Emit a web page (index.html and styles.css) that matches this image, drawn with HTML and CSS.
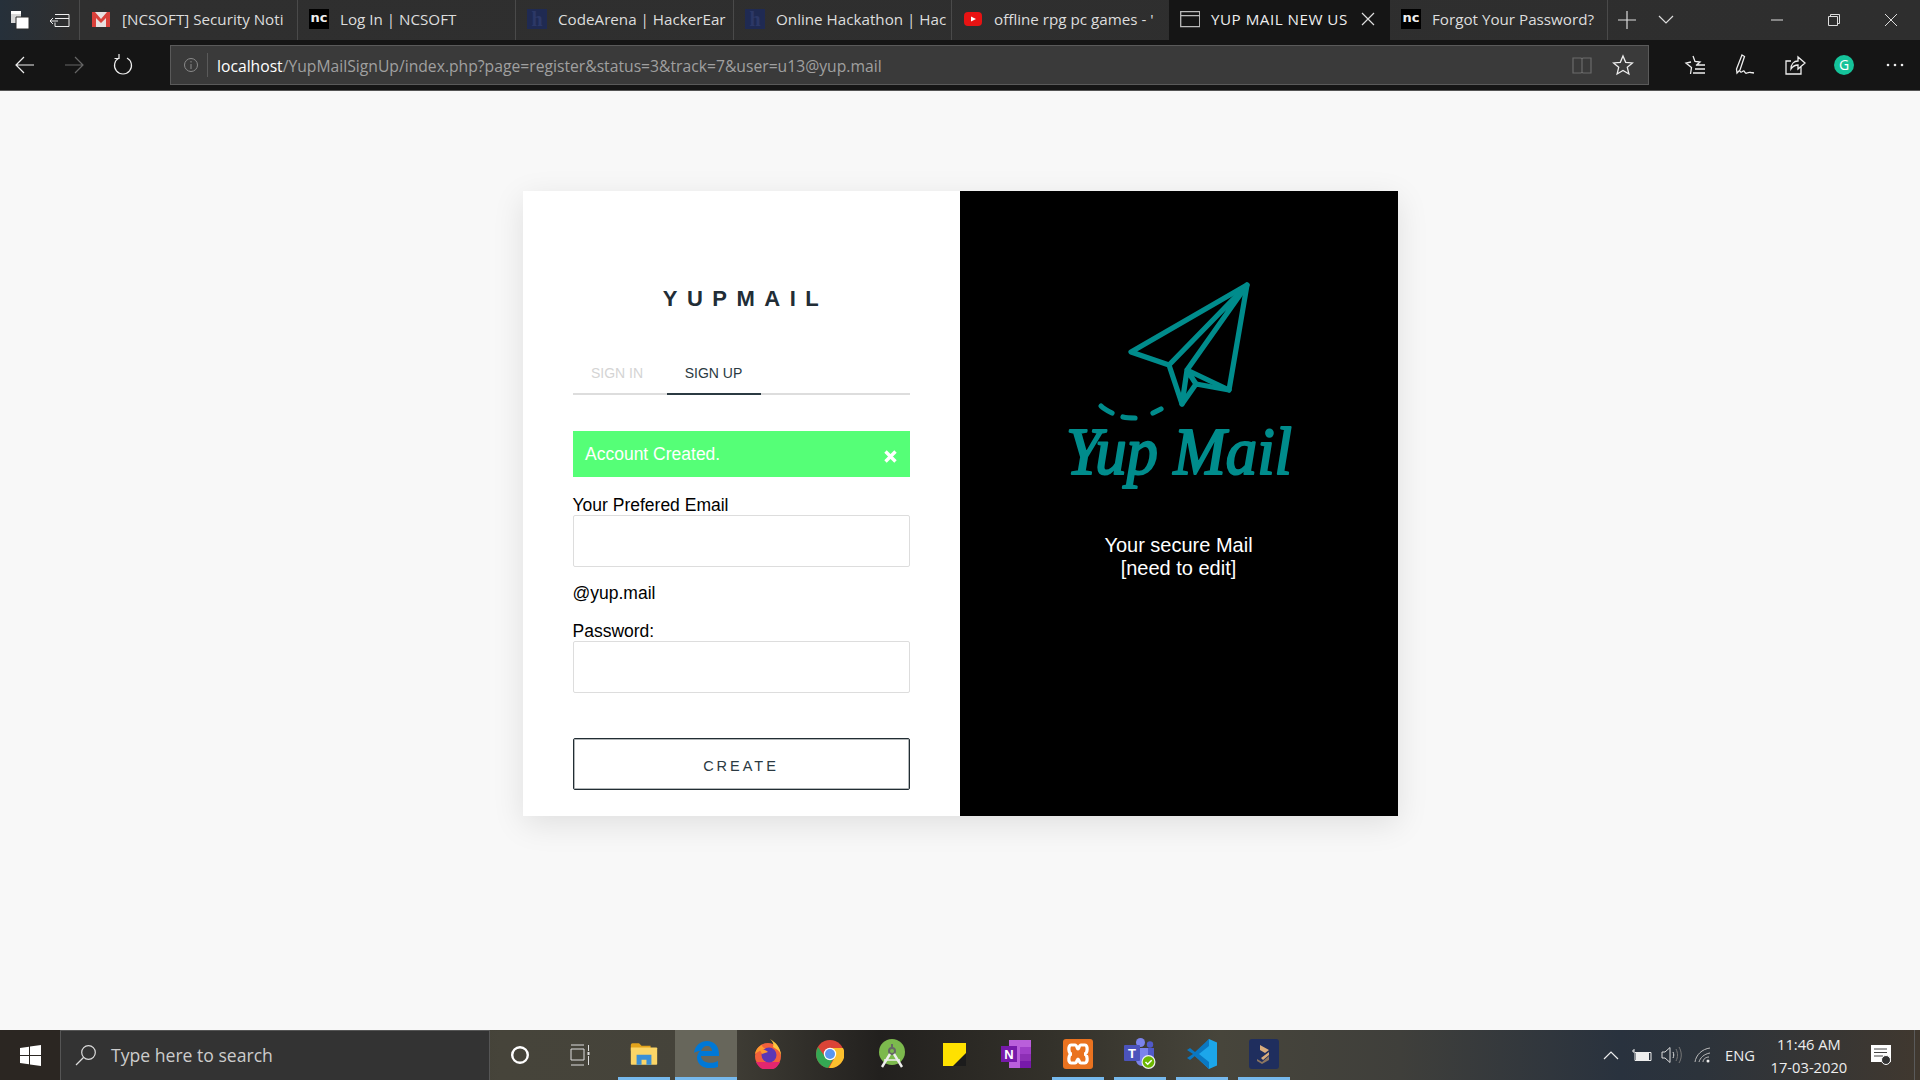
FILE: index.html
```html
<!DOCTYPE html>
<html lang="en">
<head>
    <meta charset="UTF-8">
    <title>YUP MAIL NEW USER</title>
    <link rel="stylesheet" href="styles.css">
</head>
<body>
    <div class="tabstrip">
        <div class="strip-tools">
            <svg class="ic" width="24" height="24" viewBox="0 0 24 24"><path d="M3 3h10v3H3z" fill="#fff"/><path d="M3 6h10v9H3z" fill="#d8d8d8"/><path d="M8 9h13v12H8z" fill="#fff" stroke="#2d2d2d"/></svg>
            <svg class="ic" width="22" height="22" viewBox="0 0 22 22" fill="none" stroke="#eee"><path d="M6 5.5h14v12H6v-4M6 9.5h14M9 12H1M4 9l-3 3 3 3"/></svg>
        </div>
        <div class="tab">
            <svg class="fav" viewBox="0 0 20 20"><path d="M1 3h18v15H1z" fill="#e8e0e0"/><path d="M1 18V3h3l6 7 6-7h3v15h-4V9l-5 5-5-5v9z" fill="#d9403a"/></svg>
            <span class="tab-title">[NCSOFT] Security Noti</span>
        </div>
        <div class="tab">
            <span class="fav nc">nc</span>
            <span class="tab-title">Log In | NCSOFT</span>
        </div>
        <div class="tab">
            <span class="fav hfav">h</span>
            <span class="tab-title">CodeArena | HackerEar</span>
        </div>
        <div class="tab">
            <span class="fav hfav">h</span>
            <span class="tab-title">Online Hackathon | Hac</span>
        </div>
        <div class="tab">
            <svg class="fav" viewBox="0 0 20 20"><rect x="1" y="3" width="18" height="14" rx="4" fill="#e81313"/><path d="M8 7.5l5 2.500-5 2.500z" fill="#fff"/></svg>
            <span class="tab-title">offline rpg pc games - '</span>
        </div>
        <div class="tab tab-active">
            <svg class="fav" viewBox="0 0 20 20" fill="none" stroke="#bbb" stroke-width="1.3"><path d="M.7 2.700h19v15H.7zM.7 6.700h19"/></svg>
            <span class="tab-title">YUP MAIL NEW US</span>
            <svg class="tab-close" width="14" height="14" viewBox="0 0 14 14" stroke="#ddd" stroke-width="1.2"><path d="M1 1l12 12M13 1L1 13"/></svg>
        </div>
        <div class="tab">
            <span class="fav nc">nc</span>
            <span class="tab-title">Forgot Your Password?</span>
        </div>
        <div class="strip-actions">
            <svg width="18" height="18" viewBox="0 0 18 18" stroke="#ddd" stroke-width="1.2"><path d="M0 9h18M9 0v18"/></svg>
            <svg width="16" height="10" viewBox="0 0 16 10" fill="none" stroke="#ddd" stroke-width="1.2"><path d="M1 1l7 7 7-7"/></svg>
        </div>
        <div class="win-buttons">
            <svg width="12" height="12" viewBox="0 0 12 12" stroke="#ddd"><path d="M0 6h12"/></svg>
            <svg width="12" height="12" viewBox="0 0 12 12" fill="none" stroke="#ddd"><path d="M.5 2.500h9v9h-9zM2.500 2.500v-2h9v9h-2"/></svg>
            <svg width="12" height="12" viewBox="0 0 12 12" stroke="#ddd"><path d="M0 0l12 12M12 0L0 12"/></svg>
        </div>
    </div>

    <div class="toolbar">
        <div class="nav-buttons">
            <svg width="20" height="20" viewBox="0 0 20 20" fill="none" stroke="#eee" stroke-width="1.2"><path d="M19 10H1M9 2l-8 8 8 8"/></svg>
            <svg width="20" height="20" viewBox="0 0 20 20" fill="none" stroke="#666" stroke-width="1.2"><path d="M1 10h18M11 2l8 8-8 8"/></svg>
            <svg width="20" height="22" viewBox="0 0 20 22" fill="none" stroke="#eee" stroke-width="1.2"><path d="M14 4a8.500 8.500 0 1 1-8 0M6 0v4.500H1.500"/></svg>
        </div>
        <div class="addressbar">
            <svg width="16" height="16" viewBox="0 0 16 16" fill="none" stroke="#8a8a8a"><circle cx="8" cy="8" r="6.5"/><path d="M8 7v5M8 4v1.500"/></svg>
            <span class="url"><span class="url-host">localhost</span>/YupMailSignUp/index.php?page=register&amp;status=3&amp;track=7&amp;user=u13@yup.mail</span>
            <svg width="20" height="18" viewBox="0 0 20 18" fill="none" stroke="#6a6a6a" stroke-width="1.2"><path d="M1 2h8l1 1 1-1h8v15h-8l-1-1-1 1H1zM10 3v13"/></svg>
            <svg width="22" height="22" viewBox="0 0 22 22" fill="none" stroke="#eee" stroke-width="1.3"><path d="M11 2l2.700 6.300 6.800.6-5.200 4.400 1.600 6.700-5.900-3.600-5.900 3.600 1.600-6.700-5.200-4.400 6.800-.6z"/></svg>
        </div>
        <div class="tool-icons">
            <svg width="22" height="22" viewBox="0 0 22 22" fill="none" stroke="#eee" stroke-width="1.3"><path d="M9 2l2 5.500 5 .5-4 3.500M6.500 20l1-6.500L2 9l5-1M13 11h8M11 15h10M9 19h12"/></svg>
            <svg width="22" height="24" viewBox="0 0 22 24" fill="none" stroke="#eee" stroke-width="1.3"><path d="M8 2l2.500 1.500L6 17l-3 3-.5-4zM6 18c1 3 3-1 4 0s1 3 3 2 2-1 4-.5l3 .5"/></svg>
            <svg width="22" height="22" viewBox="0 0 22 22" fill="none" stroke="#eee" stroke-width="1.3"><path d="M17 13v7H2V7h5M7 15c0-5 3-8 7-8V3l7 6-7 6v-4c-3 0-5 1-7 4z"/></svg>
            <span class="grammarly">G</span>
            <svg class="more-dots" width="18" height="4" viewBox="0 0 18 4" fill="#eee"><circle cx="2" cy="2" r="1.3"/><circle cx="9" cy="2" r="1.3"/><circle cx="16" cy="2" r="1.3"/></svg>
        </div>
    </div>

    <div class="page">
        <div class="card">
            <div class="card-left">
                <h1 class="brand">YUPMAIL</h1>
                <div class="signin-tabs">
                    <a class="signin-tab">SIGN IN</a>
                    <a class="signin-tab active">SIGN UP</a>
                </div>
                <div class="alert">
                    <span>Account Created.</span>
                    <svg class="alert-close" width="13" height="13" viewBox="0 0 13 13" stroke="#fff" stroke-width="3.4"><path d="M1.500 1.500l10 10M11.500 1.500l-10 10"/></svg>
                </div>
                <label class="field-label">Your Prefered Email</label>
                <input class="field" type="text">
                <div class="domain">@yup.mail</div>
                <label class="field-label">Password:</label>
                <input class="field" type="password">
                <button class="create-btn">CREATE</button>
            </div>
            <div class="card-right">
                <svg class="logo" width="280" height="240" viewBox="0 0 280 240" fill="none" stroke="#008c8c" stroke-width="5.2" stroke-linecap="round" stroke-linejoin="round">
                    <path d="M208 23L92 90l38 13 13 39 14-20 33 6z"/>
                    <path d="M208 23L130 103M208 23l-60 85 42 20M148 108l-5 34M148 108l9 14"/>
                    <path d="M62 144c3 3 7 5 11 7M84 155c4 1 8 1 12 1M114 151l8-4"/>
                    <text class="logo-text" x="27" y="212" textLength="226" lengthAdjust="spacingAndGlyphs">Yup Mail</text>
                </svg>
                <p class="tagline">Your secure Mail<br>[need to edit]</p>
            </div>
        </div>
    </div>

    <div class="taskbar">
        <div class="start">
            <svg width="21" height="21" viewBox="0 0 21 21" fill="#fff"><path d="M0 3l9-1.300V10H0zM10 1.500L21 0v10H10zM0 11h9v8.300L0 18zM10 11h11v10l-11-1.500z"/></svg>
        </div>
        <div class="searchbox">
            <svg width="22" height="22" viewBox="0 0 22 22" fill="none" stroke="#ddd" stroke-width="1.2"><circle cx="13.5" cy="8.5" r="6.8"/><path d="M8.500 13.500L1 21"/></svg>
            <span>Type here to search</span>
        </div>
        <div class="task-tools">
            <svg width="20" height="20" viewBox="0 0 20 20" fill="none" stroke="#fff" stroke-width="2.4"><circle cx="10" cy="10" r="7.8"/></svg>
            <svg width="20" height="22" viewBox="0 0 20 22" fill="none" stroke="#ddd"><path d="M1 1h13M1 5h13v11H1zM1 21h13M18.500 1v6M18.500 12v9"/><path d="M18.500 8v3" stroke-width="2"/></svg>
        </div>
        <div class="task-apps">
            <div class="app open">
                <svg width="28" height="26" viewBox="0 0 34 28"><path d="M1 3a2 2 0 0 1 2-2h8l3 3h11v6H1z" fill="#e2a31c"/><path d="M1 6h31a1 1 0 0 1 1 1v19a1 1 0 0 1-1 1H2a1 1 0 0 1-1-1z" fill="#fbd567"/><path d="M8 27V15h18v12h-6v-6h-6v6z" fill="#3a8fd6"/></svg>
            </div>
            <div class="app open current">
                <svg width="26" height="28" viewBox="0 0 26 28"><path d="M1 13C2 5 8 1 14 1c7 0 12 5 12 13v2H8c0 6 9 9 17 5v6c-9 3-20 1-21-9 0-3 1-5 3-7-3 0-5 1-6 2zM8 11h11c0-3-2-5-5-5s-5 2-6 5z" fill="#0078d7"/></svg>
            </div>
            <div class="app">
                <svg width="30" height="30" viewBox="0 0 30 30"><circle cx="15" cy="17" r="13" fill="#f2603c"/><path d="M3 23a13 13 0 0 0 24 0z" fill="#e3266f"/><path d="M17 0c5 3 11 8 11 17-1-6-5-7-8-9 1-3 0-5-3-8z" fill="#ffc53d"/><path d="M2 15c1-5 4-8 7-9 0 2 2 3 4 4-3 0-7 2-11 5z" fill="#ff9a2e"/><circle cx="16" cy="16" r="7.5" fill="#5b37b5"/><path d="M7 11c3-1 6 0 8 2l-6 2z" fill="#ff9a2e"/></svg>
            </div>
            <div class="app">
                <svg width="28" height="28" viewBox="0 0 28 28"><circle cx="14" cy="14" r="14" fill="#db4437"/><path d="M2 7a14 14 0 0 0 10 21l6-10H10z" fill="#34a853"/><path d="M14 8h13a14 14 0 0 1-14 20l6-11z" fill="#fbc02d"/><circle cx="14" cy="14" r="6.2" fill="#fff"/><circle cx="14" cy="14" r="5" fill="#5a95ee"/></svg>
            </div>
            <div class="app">
                <svg width="26" height="30" viewBox="0 0 26 30" fill="none"><circle cx="13" cy="13" r="13" fill="#7cb94d"/><path d="M13 5v5" stroke="#666" stroke-width="2"/><circle cx="13" cy="12" r="3" stroke="#666" stroke-width="2"/><path d="M11 15L3 28M15 15l8 13" stroke="#eee" stroke-width="2.4"/><path d="M5 21h16" stroke="#eee" stroke-width="1.5"/></svg>
            </div>
            <div class="app">
                <svg width="23" height="23" viewBox="0 0 23 23"><path d="M0 0h23v23H0z" fill="#ffe100"/><path d="M23 10v13H10z" fill="#1c1c1c"/></svg>
            </div>
            <div class="app">
                <svg width="30" height="28" viewBox="0 0 30 28"><path d="M8 0h22v28H8z" fill="#ba5fdb"/><path d="M19 7h11v7H19z" fill="#a03fc8"/><path d="M19 14h11v7H19z" fill="#8d2fb5"/><path d="M19 21h11v7H19z" fill="#7719aa"/><rect y="6" width="16" height="16" fill="#7719aa"/><text class="onenote-n" x="8" y="19">N</text></svg>
            </div>
            <div class="app open">
                <svg width="30" height="30" viewBox="0 0 30 30"><rect width="30" height="30" rx="3" fill="#ea7320"/><path d="M8 6h4c2 0 2 4 3 4s1-4 3-4h4c3 0 3 9-1 9 4 0 4 9 1 9h-4c-2 0-2-4-3-4s-1 4-3 4H8c-3 0-3-9 1-9-4 0-4-9-1-9z" fill="none" stroke="#fff" stroke-width="3.2"/></svg>
            </div>
            <div class="app open">
                <svg width="32" height="32" viewBox="0 0 32 32"><circle cx="16.5" cy="4.5" r="4.5" fill="#7b83eb"/><circle cx="26" cy="6.5" r="3.2" fill="#5059c9"/><path d="M21 10h9v11a4 4 0 0 1-4 4h-5z" fill="#5059c9"/><path d="M10 10h14v12a6 6 0 0 1-12 0z" fill="#7b83eb"/><rect y="7" width="16" height="16" rx="1" fill="#4b53bc"/><text class="teams-t" x="8" y="20">T</text><circle cx="24.5" cy="24" r="7" fill="#eee"/><circle cx="24.5" cy="24" r="5.8" fill="#6bb700"/><path d="M21.500 24l2.200 2.200 4-4" fill="none" stroke="#fff" stroke-width="1.5"/></svg>
            </div>
            <div class="app open">
                <svg width="30" height="30" viewBox="0 0 30 30"><path d="M22 0l8 3.500v23L22 30 8 17z" fill="#1ca6ea"/><path d="M22 7L12 15l10 8v7L8 17 3 21l-3-2 6-4-6-4 3-2 5 4L22 0z" fill="#0a78c2"/></svg>
            </div>
            <div class="app open">
                <svg width="30" height="30" viewBox="0 0 30 30"><rect width="30" height="30" rx="3" fill="#1f2e5e"/><path d="M11 6l9 5-4 3-5-3zM20 13l-8 6 2 2 6-5z" fill="#d9ac7c"/><path d="M8 20l5 3 7-6v4l-7 4-5-3z" fill="#8b7560"/></svg>
            </div>
        </div>
        <div class="tray">
            <svg width="16" height="10" viewBox="0 0 16 10" fill="none" stroke="#eee" stroke-width="1.2"><path d="M1 9l7-7 7 7"/></svg>
            <svg class="tray-battery" width="20" height="12" viewBox="0 0 20 12"><path d="M0 2h2M2 0v4" stroke="#eee"/><path d="M3 3.500h16v8H3z" fill="none" stroke="#eee"/><path d="M4 4h13v7H4z" fill="#eee"/></svg>
            <svg class="tray-sound" width="21" height="18" viewBox="0 0 21 18" fill="none" stroke="#ddd"><path d="M1 6h3l5-4.500v15L4 12H1zM12 6c1 2 1 4 0 6"/><path d="M15 3c2 4 2 8 0 12M18 1c3 5 3 11 0 16" stroke="#777"/></svg>
            <svg class="tray-wifi" width="18" height="16" viewBox="0 0 18 16" fill="none" stroke="#bbb"><path d="M1 15C2 8 8 2 16 1M5 15c1-4 5-8 11-9M9 15c0-3 3-5 6-5"/><circle cx="14" cy="14" r="1.5" fill="#eee" stroke="none"/></svg>
            <span class="tray-lang">ENG</span>
            <div class="clock">
                <span>11:46 AM</span>
                <span>17-03-2020</span>
            </div>
            <svg class="tray-notes" width="21" height="21" viewBox="0 0 21 21"><path d="M0 0h20v17H0z" fill="#fff"/><path d="M3 4h13M3 7.500h13M3 11h9" stroke="#444"/><circle cx="15" cy="15" r="4.5" fill="#333" stroke="#fff"/></svg>
        </div>
    </div>
</body>
</html>
```

FILE: styles.css
```css
body{
    margin: 0;
    height: 1080px;
    overflow: hidden;
    display: flex;
    flex-direction: column;
    background-color: #f8f8f8;
    font-family: "Liberation Sans", Arial, sans-serif;
}

/* browser chrome */
.tabstrip{
    height: 40px;
    flex: none;
    display: flex;
    align-items: stretch;
    color: #ddd;
    font-family: "Open Sans", sans-serif;
    font-size: 15.2px;
    background: linear-gradient(90deg, #26303a 0, #2f2f2f 70px, #2e2e2e 100%);
}
.strip-tools{
    width: 80px;
    display: flex;
    align-items: center;
    justify-content: space-between;
    padding: 0 8px;
    box-sizing: border-box;
    border-right: 1px solid #4a4a4a;
}
.tab{
    width: 218px;
    box-sizing: border-box;
    display: flex;
    align-items: center;
    padding: 0 3px 2px 11px;
    border-right: 1px solid #4a4a4a;
}
.tab-active{
    width: 221px;
    margin-left: -1px;
    height: 45px;
    padding: 0 10px 7px 11px;
    color: #eee;
    border-right: none;
    background-color: #151515;
}
.tab-active .tab-title{
    letter-spacing: .5px;
}
.fav{
    width: 20px;
    height: 20px;
    flex: none;
    margin-right: 11px;
}
.nc{
    background-color: #000;
    color: #eee;
    font: bold 13px/18px "DejaVu Sans", sans-serif;
    text-align: center;
}
.hfav{
    background-color: #1f2a52;
    color: #2c3866;
    font: bold 20px/20px "Liberation Serif", serif;
    text-align: center;
}
.tab-title{
    flex: 1;
    white-space: nowrap;
}
.tab-close{
    flex: none;
    margin-right: 5px;
}
.strip-actions{
    display: flex;
    align-items: center;
    gap: 22px;
    padding-left: 10px;
}
.win-buttons{
    margin-left: auto;
    display: flex;
    align-items: center;
    gap: 45px;
    padding-right: 23px;
}

.toolbar{
    height: 51px;
    flex: none;
    box-sizing: border-box;
    padding: 5px 0;
    display: flex;
    align-items: center;
    background-color: #151515;
    border-bottom: 1px solid #555;
}
.nav-buttons{
    width: 170px;
    display: flex;
    align-items: center;
    gap: 29px;
    padding-left: 15px;
    box-sizing: border-box;
}
.addressbar{
    width: 1479px;
    height: 40px;
    box-sizing: border-box;
    display: flex;
    align-items: center;
    padding: 0 14px 0 12px;
    background-color: #3a3a3a;
    border: 1px solid #5a5a5a;
}
.url{
    flex: 1;
    margin-left: 8px;
    padding: 2px 0 0 9px;
    height: 24px;
    box-sizing: border-box;
    line-height: 22px;
    border-left: 1px solid #5a5a5a;
    color: #a0a0a0;
    font-family: "Open Sans", sans-serif;
    font-size: 15.7px;
    white-space: nowrap;
}
.url-host{
    color: #fff;
}
.addressbar svg:last-child{
    margin-left: 20px;
}
.tool-icons{
    flex: 1;
    display: flex;
    align-items: center;
    gap: 28px;
    padding: 0 16px 0 35px;
}
.more-dots{
    margin-left: auto;
}
.grammarly{
    width: 20px;
    height: 20px;
    border-radius: 50%;
    background-color: #15c39a;
    color: #fff;
    font: 14px/20px "Open Sans", sans-serif;
    text-align: center;
}

/* the page */
.page{
    flex: 1;
    display: flex;
    justify-content: center;
    align-items: flex-start;
    padding-top: 100px;
}
.card{
    width: 875px;
    height: 625px;
    display: flex;
    background-color: #fff;
    box-shadow: 0 8px 30px rgba(0, 0, 0, .1);
}
.card-left{
    width: 437px;
    box-sizing: border-box;
    padding: 0 50px;
    display: flex;
    flex-direction: column;
}
.brand{
    margin: 96px 0 0;
    padding-left: 9px;
    height: 24px;
    text-align: center;
    color: #222d36;
    font-size: 22px;
    line-height: 24px;
    font-weight: bold;
    letter-spacing: 9.5px;
}
.signin-tabs{
    margin-top: 43px;
    display: flex;
    border-bottom: 2px solid #ddd;
}
.signin-tab{
    width: 94px;
    height: 41px;
    box-sizing: border-box;
    margin-bottom: -2px;
    padding-right: 5px;
    text-align: center;
    font-size: 14px;
    line-height: 39px;
    color: #d4d4d4;
}
.signin-tab.active{
    padding-right: 0;
    color: #2b3a42;
    border-bottom: 2px solid #2b3a42;
}
.alert{
    margin-top: 36px;
    height: 46px;
    flex: none;
    box-sizing: border-box;
    padding: 0 12px 0 12.5px;
    display: flex;
    justify-content: space-between;
    align-items: center;
    color: #fff;
    font-size: 17.5px;
    background-color: #55ff77;
}
.alert-close{
    margin-top: 4px;
    margin-right: 1px;
}
.field-label{
    margin-top: 18px;
    color: #000;
    font-size: 17.5px;
    line-height: 20px;
}
.field{
    height: 52px;
    box-sizing: border-box;
    border: 1px solid #ddd;
    border-radius: 2px;
    background-color: #fff;
}
.domain{
    margin-top: 16px;
    font-size: 17.5px;
    line-height: 20px;
    color: #000;
}
.create-btn{
    margin-top: 45px;
    height: 52px;
    padding: 3px 0 0;
    background-color: #fff;
    border: 1px solid #222d33;
    box-shadow: inset 0 0 0 1px rgba(34, 45, 51, .35);
    border-radius: 2px;
    color: #2b3a42;
    font-family: "Liberation Sans", Arial, sans-serif;
    font-size: 14.5px;
    letter-spacing: 3px;
}
.card-right{
    flex: 1;
    background-color: #000;
    color: #fff;
    display: flex;
    flex-direction: column;
    align-items: center;
    padding-top: 71px;
}
.logo{
    margin-left: 1px;
}
.logo-text{
    font-family: "Liberation Serif", serif;
    font-style: italic;
    font-size: 68px;
    fill: #008c8c;
    stroke-width: 2.2;
}
.tagline{
    margin: 32px 0 0;
    text-align: center;
    font-size: 20px;
    line-height: 23px;
}

/* windows taskbar */
.taskbar{
    height: 50px;
    flex: none;
    display: flex;
    color: #eee;
    font-family: "Open Sans", sans-serif;
    background: linear-gradient(90deg, #2b2622 0, #2b2622 60px, #46443a 500px, #45433a 700px, #22201e 880px, #33312a 1050px, #47453b 1220px, #3f3f3b 1400px, #29323e 1620px, #2c333b 1700px, #40382f 1920px);
}
.start{
    width: 60px;
    display: flex;
    align-items: center;
    justify-content: center;
}
.searchbox{
    width: 430px;
    box-sizing: border-box;
    display: flex;
    align-items: center;
    gap: 14px;
    padding: 0 0 2px 14px;
    font-size: 17.6px;
    color: #ccc;
    background-color: #333;
    border: 1px solid #555;
    border-bottom: none;
}
.task-tools{
    width: 123px;
    display: flex;
    align-items: center;
    gap: 40px;
    padding-left: 20px;
    box-sizing: border-box;
}
.task-apps{
    display: flex;
}
.app{
    width: 62px;
    height: 50px;
    box-sizing: border-box;
    padding-bottom: 2px;
    display: flex;
    align-items: center;
    justify-content: center;
    position: relative;
}
.app.open::after{
    content: "";
    position: absolute;
    left: 5px;
    right: 5px;
    bottom: 0;
    height: 3px;
    background-color: #76b9ed;
}
.app.current{
    background-color: #67665b;
}
.app.current::after{
    left: 0;
    right: 0;
}
.onenote-n, .teams-t{
    font-family: "Liberation Sans", sans-serif;
    font-weight: bold;
    font-size: 13px;
    fill: #fff;
    text-anchor: middle;
}
.tray{
    flex: 1;
    display: flex;
    align-items: center;
    padding-left: 308px;
    margin-right: 5px;
    font-size: 14.7px;
    border-right: 1px solid #5a5a5a;
}
.tray-battery{
    margin-left: 13px;
}
.tray-sound{
    margin-left: 9px;
}
.tray-wifi{
    margin-left: 12px;
}
.tray-lang{
    margin-left: 13px;
}
.clock{
    width: 90px;
    margin-left: 9px;
    display: flex;
    flex-direction: column;
    align-items: center;
    gap: 3px;
    line-height: 20px;
}
.tray-notes{
    margin-left: 17px;
}

.ic{
    display: block;
}
```
